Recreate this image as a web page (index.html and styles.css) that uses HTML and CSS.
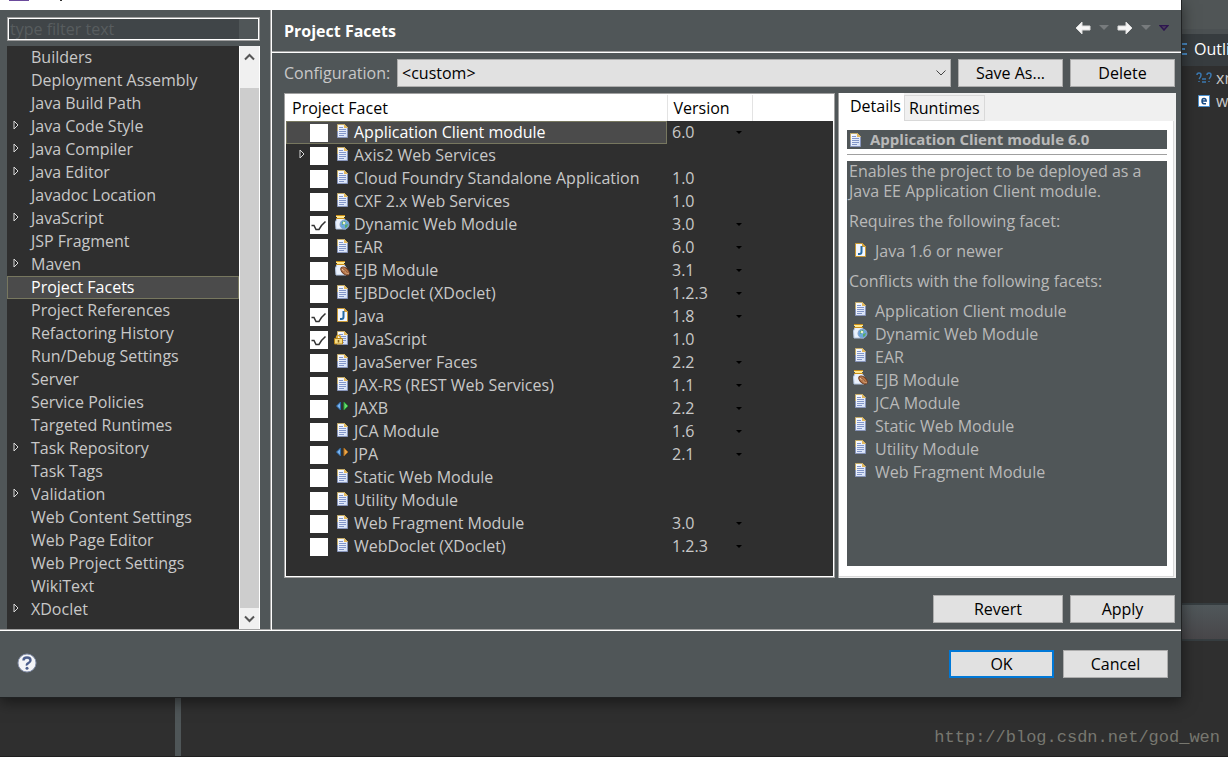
FILE: index.html
```html
<!DOCTYPE html>
<html lang="en">
<head>
<meta charset="utf-8">
<title>Properties</title>
<link rel="stylesheet" href="styles.css">
</head>
<body>
<svg class="defs" aria-hidden="true">
  <defs>
    <linearGradient id="paper" x1="0" y1="0" x2="1" y2="1"><stop offset="0" stop-color="#fff"/><stop offset="1" stop-color="#cfdcf5"/></linearGradient>
  </defs>
  <symbol id="doc" viewBox="0 0 16 16">
    <path d="M3.500 2.500h7L13.500 5.500v10H3.500z" fill="url(#paper)" stroke="#8795bb"/>
    <path d="M3.500 9V2.500h7L13.500 5.500" fill="none" stroke="#c4ac69"/>
    <path d="M10 2l4 4h-4z" fill="#e3b95e"/>
    <path d="M5 5.500h4M5 7.500h7M5 9.500h7M5 11.500h7M5 13.500h5" stroke="#8296c9"/>
  </symbol>
  <symbol id="jar" viewBox="0 0 16 16">
    <path d="M3 4.500h7l2 3v7.500H2L1.500 8z" fill="#eaf1fc" stroke="#b3c6e2"/>
    <path d="M2 1.500h9M2 4.500h9" stroke="#c98f1a"/>
    <path d="M2 2.500h9M3 3.500h7" stroke="#ffe890"/>
  </symbol>
  <symbol id="web" viewBox="0 0 16 16">
    <use href="#jar"/>
    <circle cx="10.500" cy="10.500" r="4.500" fill="#6aa6dc" stroke="#8ba5c9"/>
    <path d="M8 8l3-1 1 2-2 1-2 1zM11 11l3-1-1 3-2 1z" fill="#5ba863"/>
    <path d="M9 8.500l2 1" stroke="#f5f5d5" stroke-width="2"/>
  </symbol>
  <symbol id="ejb" viewBox="0 0 16 16">
    <use href="#jar"/>
    <ellipse cx="11" cy="11" rx="5" ry="3" transform="rotate(42 11 11)" fill="#b9794c" stroke="#6e3d22"/>
    <path d="M8 9.500l3 1 1 2 3 1.500" fill="none" stroke="#f1c9a0"/>
    <path d="M9 8.500l5 5" stroke="#7b4425"/>
  </symbol>
  <symbol id="java" viewBox="0 0 16 16">
    <path d="M3.500 2.500h7L13.500 5.500v10H3.500z" fill="#f2f7ff" stroke="#c99a35"/>
    <path d="M10 2l4 4h-4z" fill="#d7a53c"/>
    <path d="M9.500 5v6q0 2-2 2H6" fill="none" stroke="#246aa5" stroke-width="2"/>
  </symbol>
  <symbol id="lock" viewBox="0 0 16 16">
    <use href="#doc"/>
    <path d="M2.500 10V8.500a2 2 0 0 1 4 0V10" fill="none" stroke="#d8a52b" stroke-width="1.500"/>
    <path d="M.5 9.500h8V15h-8z" fill="#f5dc83" stroke="#b98518"/>
    <path d="M4.500 11v2.500" stroke="#87621a" stroke-width="1.500"/>
  </symbol>
  <symbol id="jaxb" viewBox="0 0 16 16">
    <path d="M6.500 4v8L2.500 8z" fill="#79b3ef" stroke="#2868a8"/><path d="M10 4v8L14 8z" fill="#69d66e" stroke="#259b36"/>
  </symbol>
  <symbol id="jpa" viewBox="0 0 16 16">
    <path d="M6.500 4v8L2.500 8z" fill="#79b3ef" stroke="#2868a8"/><path d="M10 4v8L14 8z" fill="#e8a54b" stroke="#a96b1d"/>
  </symbol>
  <symbol id="twisty" viewBox="0 0 6 10"><path d="M1 1v8l4-4z" fill="#222" stroke="#dadada"/></symbol>
  <symbol id="arrow" viewBox="0 0 16 14"><path d="M1 7l6-6v4h8v4H7v4z" fill="#f7f7f7" stroke="#dcdcdc"/></symbol>
</svg>

<div class="workbench">
  <div class="bench-toolbar"></div>
  <div class="bench-main">
    <div class="bench-left"></div>
    <div class="bench-right">
      <aside class="outline">
        <div class="outline-tab"><svg width="7" height="12" viewBox="0 0 7 12"><path d="M0 1h6M1 6h3M0 11h6" stroke="#4a8bc4" stroke-width="2"/></svg>Outline</div>
        <div class="outline-row"><svg width="16" height="12" viewBox="0 0 16 12"><path d="M1 3q0-2 2-2t2 2-2 4m0 2v1M11 3q0-2 2-2t2 2-2 4m0 2v1M6 7h4M6 10h4" fill="none" stroke="#3b78b0" stroke-width="1.500"/></svg>xml</div>
        <div class="outline-row"><svg class="el-icon" width="12" height="12" viewBox="0 0 12 12"><path d="M.5.500h11v11H.5z" fill="#fff" stroke="#4a90cf"/><path d="M4 6h4.200Q8 3.500 6 3.500T4 6 6 8.800h2" fill="none" stroke="#1b4d86" stroke-width="1.500"/></svg>web-app</div>
      </aside>
      <div class="bench-strip"></div>
      <div class="bench-bottom"><span class="watermark">http://blog.csdn.net/god_wen</span></div>
    </div>
  </div>
</div>

<div class="dialog" role="dialog" aria-label="Properties">
  <div class="titlebar"><svg width="70" height="4" viewBox="0 0 70 4"><path d="M9 0h20" stroke="#6b4a9c" stroke-width="2"/><path d="M60 0h2" stroke="#333" stroke-width="2"/></svg></div>
  <div class="pages">
    <nav class="sidebar">
      <input class="filter" type="text" placeholder="type filter text" aria-label="type filter text">
      <div class="tree-box">
        <ul class="tree">
          <li>Builders</li>
          <li>Deployment Assembly</li>
          <li>Java Build Path</li>
          <li class="parent"><svg class="twisty"><use href="#twisty"/></svg>Java Code Style</li>
          <li class="parent"><svg class="twisty"><use href="#twisty"/></svg>Java Compiler</li>
          <li class="parent"><svg class="twisty"><use href="#twisty"/></svg>Java Editor</li>
          <li>Javadoc Location</li>
          <li class="parent"><svg class="twisty"><use href="#twisty"/></svg>JavaScript</li>
          <li>JSP Fragment</li>
          <li class="parent"><svg class="twisty"><use href="#twisty"/></svg>Maven</li>
          <li class="selected">Project Facets</li>
          <li>Project References</li>
          <li>Refactoring History</li>
          <li>Run/Debug Settings</li>
          <li>Server</li>
          <li>Service Policies</li>
          <li>Targeted Runtimes</li>
          <li class="parent"><svg class="twisty"><use href="#twisty"/></svg>Task Repository</li>
          <li>Task Tags</li>
          <li class="parent"><svg class="twisty"><use href="#twisty"/></svg>Validation</li>
          <li>Web Content Settings</li>
          <li>Web Page Editor</li>
          <li>Web Project Settings</li>
          <li>WikiText</li>
          <li class="parent"><svg class="twisty"><use href="#twisty"/></svg>XDoclet</li>
        </ul>
        <div class="scrollbar">
          <button class="scroll-up" aria-label="Scroll up"><svg width="11" height="8" viewBox="0 0 11 8"><path d="M1 6.500l4.500-4.500L10 6.500" fill="none" stroke="#555" stroke-width="2"/></svg></button>
          <div class="thumb"></div>
          <button class="scroll-down" aria-label="Scroll down"><svg width="11" height="8" viewBox="0 0 11 8"><path d="M1 1.500L5.500 6 10 1.500" fill="none" stroke="#555" stroke-width="2"/></svg></button>
        </div>
      </div>
    </nav>
    <main class="page">
      <header class="page-head">
        <h1>Project Facets</h1>
        <div class="history">
          <button aria-label="Back"><svg width="16" height="14"><use href="#arrow"/></svg></button>
          <button aria-label="Back history"><svg width="10" height="6" viewBox="0 0 10 6"><path d="M0 0h10L5 5z" fill="#777b7d"/></svg></button>
          <button aria-label="Forward"><svg class="flip" width="16" height="14"><use href="#arrow"/></svg></button>
          <button aria-label="Forward history"><svg width="10" height="6" viewBox="0 0 10 6"><path d="M0 0h10L5 5z" fill="#777b7d"/></svg></button>
          <button aria-label="Menu"><svg width="10" height="6" viewBox="0 0 10 6"><path d="M1 .5h8L5 5z" fill="#4b4158" stroke="#2e1650" stroke-width="1.500"/></svg></button>
        </div>
      </header>
      <div class="page-body">
        <div class="config">
          <label for="config">Configuration:</label>
          <div class="combo">
            <select id="config"><option>&lt;custom&gt;</option></select>
            <svg class="chevron" width="10" height="6" viewBox="0 0 10 6"><path d="M.5.500L5 5 9.500.500" fill="none" stroke="#444"/></svg>
          </div>
          <button class="btn">Save As...</button>
          <button class="btn">Delete</button>
        </div>
        <div class="panes">
          <div class="facets">
            <table>
              <colgroup><col class="c-name"><col class="c-version"><col></colgroup>
              <thead><tr><th>Project Facet</th><th>Version</th><th></th></tr></thead>
              <tbody>
                <tr class="current"><td><label><input type="checkbox"><svg class="icon"><use href="#doc"/></svg>Application Client module</label></td><td class="drop">6.0</td><td></td></tr>
                <tr class="expandable"><td><svg class="twisty"><use href="#twisty"/></svg><label><input type="checkbox"><svg class="icon"><use href="#doc"/></svg>Axis2 Web Services</label></td><td></td><td></td></tr>
                <tr><td><label><input type="checkbox"><svg class="icon"><use href="#doc"/></svg>Cloud Foundry Standalone Application</label></td><td>1.0</td><td></td></tr>
                <tr><td><label><input type="checkbox"><svg class="icon"><use href="#doc"/></svg>CXF 2.x Web Services</label></td><td>1.0</td><td></td></tr>
                <tr><td><label><input type="checkbox" checked><svg class="icon"><use href="#web"/></svg>Dynamic Web Module</label></td><td class="drop">3.0</td><td></td></tr>
                <tr><td><label><input type="checkbox"><svg class="icon"><use href="#doc"/></svg>EAR</label></td><td class="drop">6.0</td><td></td></tr>
                <tr><td><label><input type="checkbox"><svg class="icon"><use href="#ejb"/></svg>EJB Module</label></td><td class="drop">3.1</td><td></td></tr>
                <tr><td><label><input type="checkbox"><svg class="icon"><use href="#doc"/></svg>EJBDoclet (XDoclet)</label></td><td class="drop">1.2.3</td><td></td></tr>
                <tr><td><label><input type="checkbox" checked><svg class="icon"><use href="#java"/></svg>Java</label></td><td class="drop">1.8</td><td></td></tr>
                <tr><td><label><input type="checkbox" checked><svg class="icon"><use href="#lock"/></svg>JavaScript</label></td><td>1.0</td><td></td></tr>
                <tr><td><label><input type="checkbox"><svg class="icon"><use href="#doc"/></svg>JavaServer Faces</label></td><td class="drop">2.2</td><td></td></tr>
                <tr><td><label><input type="checkbox"><svg class="icon"><use href="#doc"/></svg>JAX-RS (REST Web Services)</label></td><td class="drop">1.1</td><td></td></tr>
                <tr><td><label><input type="checkbox"><svg class="icon"><use href="#jaxb"/></svg>JAXB</label></td><td class="drop">2.2</td><td></td></tr>
                <tr><td><label><input type="checkbox"><svg class="icon"><use href="#doc"/></svg>JCA Module</label></td><td class="drop">1.6</td><td></td></tr>
                <tr><td><label><input type="checkbox"><svg class="icon"><use href="#jpa"/></svg>JPA</label></td><td class="drop">2.1</td><td></td></tr>
                <tr><td><label><input type="checkbox"><svg class="icon"><use href="#doc"/></svg>Static Web Module</label></td><td></td><td></td></tr>
                <tr><td><label><input type="checkbox"><svg class="icon"><use href="#doc"/></svg>Utility Module</label></td><td></td><td></td></tr>
                <tr><td><label><input type="checkbox"><svg class="icon"><use href="#doc"/></svg>Web Fragment Module</label></td><td class="drop">3.0</td><td></td></tr>
                <tr><td><label><input type="checkbox"><svg class="icon"><use href="#doc"/></svg>WebDoclet (XDoclet)</label></td><td class="drop">1.2.3</td><td></td></tr>
              </tbody>
            </table>
          </div>
          <section class="info">
            <div class="tabs" role="tablist">
              <button class="tab active" role="tab" aria-selected="true">Details</button>
              <button class="tab" role="tab" aria-selected="false">Runtimes</button>
            </div>
            <div class="tab-body">
              <h2><svg class="icon"><use href="#doc"/></svg>Application Client module 6.0</h2>
              <div class="description">
                <p>Enables the project to be deployed as a Java EE Application Client module.</p>
                <p>Requires the following facet:</p>
                <ul>
                  <li><svg class="icon"><use href="#java"/></svg>Java 1.6 or newer</li>
                </ul>
                <p>Conflicts with the following facets:</p>
                <ul>
                  <li><svg class="icon"><use href="#doc"/></svg>Application Client module</li>
                  <li><svg class="icon"><use href="#web"/></svg>Dynamic Web Module</li>
                  <li><svg class="icon"><use href="#doc"/></svg>EAR</li>
                  <li><svg class="icon"><use href="#ejb"/></svg>EJB Module</li>
                  <li><svg class="icon"><use href="#doc"/></svg>JCA Module</li>
                  <li><svg class="icon"><use href="#doc"/></svg>Static Web Module</li>
                  <li><svg class="icon"><use href="#doc"/></svg>Utility Module</li>
                  <li><svg class="icon"><use href="#doc"/></svg>Web Fragment Module</li>
                </ul>
              </div>
            </div>
          </section>
        </div>
        <div class="page-actions">
          <button class="btn wide">Revert</button>
          <button class="btn">Apply</button>
        </div>
      </div>
    </main>
  </div>
  <footer class="dialog-foot">
    <button class="help" aria-label="Help"><svg width="20" height="20" viewBox="0 0 20 20"><circle cx="10" cy="10" r="9" fill="#f4f5f7" stroke="#8792ad"/><path d="M6.500 7.500Q6.500 4.500 10 4.500T13.500 7.300Q13.500 9 11.500 10T10 12.500" fill="none" stroke="#4d5f8c" stroke-width="2.400"/><circle cx="10" cy="15.300" r="1.500" fill="#4d5f8c"/></svg></button>
    <div class="dialog-actions">
      <button class="btn default">OK</button>
      <button class="btn">Cancel</button>
    </div>
  </footer>
</div>
</body>
</html>
```

FILE: styles.css
```css
* { box-sizing: border-box; }
body {
  margin: 0;
  height: 100vh;
  overflow: hidden;
  background: #2f2f2f;
  color: #c8c8c8;
  font: 16px/20px "Open Sans", sans-serif;
}
button, input, select { font: inherit; }
ul { list-style: none; margin: 0; padding: 0; }
svg { display: block; flex: none; }
.defs { position: absolute; width: 0; height: 0; }
.icon { width: 16px; height: 16px; }
.twisty { width: 6px; height: 10px; }

/* Workbench behind the dialog */
.workbench { height: 100vh; display: flex; flex-direction: column; }
.bench-toolbar { height: 34px; background: #505556; border-bottom: 5px solid #4b5052; }
.bench-main { flex: 1; display: flex; border-bottom: 1px solid #1f1f1f; }
.bench-left { width: 181px; border-right: 6px solid #4f5658; }
.bench-right { flex: 1; display: flex; flex-direction: column; }
.outline { flex: 1; align-self: flex-end; width: 47px; overflow: hidden; white-space: nowrap; }
.outline-tab { display: flex; align-items: center; gap: 6px; height: 32px; padding-bottom: 2px; background: #373c3f; color: #fff; }
.outline-row { display: flex; align-items: center; gap: 4px; height: 23px; padding-left: 15px; }
.el-icon { margin: 0 2px; }
.bench-strip { height: 38px; background: linear-gradient(#50575a, #484649); border: solid #363d40; border-width: 2px 0; }
.bench-bottom { height: 115px; display: flex; justify-content: flex-end; align-items: flex-end; padding: 0 8px 6px; }
.watermark { font: 17px/24px "Liberation Mono", monospace; color: #77776f; }

/* Dialog window */
.dialog {
  position: absolute;
  inset: 0 46px 59px 0;
  display: flex;
  flex-direction: column;
  background: #505658;
  border: solid #202223;
  border-width: 0 1px 1px 0;
  box-shadow: 0 4px 14px rgba(0, 0, 0, .5);
}
.titlebar { height: 10px; background: #fff; }
.pages { flex: 1; min-height: 0; display: flex; border-bottom: 1px solid #fff; box-shadow: inset 0 -1px #a0a0a0; }
.sidebar { width: 272px; padding: 7px 11px 0 7px; display: flex; flex-direction: column; gap: 5px; border-right: 1px solid #fff; box-shadow: inset -1px 0 #a0a0a0; }
.filter {
  width: 100%;
  height: 24px;
  padding: 0 2px;
  border: 1px solid #a0a0a0;
  outline: 1px solid #fff;
  outline-offset: -2px;
  background: linear-gradient(90deg, #404548 92%, #505658 92%);
  color: #fff;
}
.filter::placeholder { color: #585d5f; opacity: 1; }
.tree-box { flex: 1; min-height: 0; display: flex; background: #2f2f2f; margin-bottom: 1px; }
.tree { flex: 1; overflow: hidden; }
.tree li { display: flex; align-items: center; gap: 12px; height: 23px; padding: 0 0 2px 24px; white-space: nowrap; }
.tree .parent { padding-left: 6px; }
.tree .twisty { margin-bottom: 2px; }
.tree .selected { background: #4b4b4b; border: 1px solid #77775f; padding-left: 23px; color: #fff; }
.scrollbar { width: 21px; display: flex; flex-direction: column; background: #f0f0f0; border: solid #fff; border-width: 0 1px; }
.scrollbar button { border: 0; padding: 0; background: none; display: flex; justify-content: center; align-items: center; }
.scroll-up { height: 21px; margin-bottom: 21px; }
.scroll-down { height: 21px; }
.thumb { flex: 1; background: #cdcdcd; }

.page { flex: 1; min-width: 0; display: flex; flex-direction: column; }
.page-head { height: 43px; flex: none; display: flex; justify-content: space-between; padding: 0 12px; border-bottom: 1px solid #fff; box-shadow: inset 0 -1px #a0a0a0; }
h1 { margin: 11px 0 0; font-size: 16px; line-height: 20px; color: #fff; }
.history { display: flex; align-items: center; gap: 8px; height: 36px; }
.history button { border: 0; padding: 0; background: none; }
.flip { transform: scaleX(-1); }
.page-body { flex: 1; min-height: 0; display: flex; flex-direction: column; padding: 6px 5px 7px 12px; }
.config { display: flex; align-items: center; gap: 7px; padding-right: 1px; }
.config label { width: 106px; }
.combo { flex: 1; display: flex; position: relative; }
.combo select { appearance: none; width: 100%; height: 28px; padding: 0 4px; border: 1px solid #adadad; border-radius: 0; background: #e1e1e1; color: #000; }
.chevron { position: absolute; right: 5px; top: 11px; pointer-events: none; }
.btn { width: 105px; height: 28px; padding: 0; border: 1px solid #adadad; background: #e1e1e1; color: #000; }
.btn.wide { width: 130px; }
.btn.default { border: 2px solid #0078d7; }

.panes { flex: 1; min-height: 0; display: grid; grid-template-columns: 1fr 338px; gap: 3px; margin: 6px 0 17px; }
.facets { background: #2f2f2f; border: 1px solid #a0a0a0; outline: 1px solid #fff; outline-offset: -2px; padding: 1px; overflow: hidden; }
table { width: 100%; table-layout: fixed; border-collapse: collapse; }
.c-name { width: 381px; }
.c-version { width: 85px; }
th { height: 26px; padding: 0 6px; background: #fff; color: #000; font-weight: 400; text-align: left; border-right: 1px solid #e3e3e3; }
th:last-child { border: 0; }
td { height: 23px; padding: 0 6px 2px 5px; vertical-align: middle; }
td:first-child { padding: 0 0 0 24px; }
td label { display: flex; align-items: center; padding-bottom: 1px; }
td .icon { margin: 0 4px 5px 6px; }
input[type="checkbox"] { appearance: none; flex: none; width: 18px; height: 18px; margin: 2px 0 0; background: #fff; }
input[type="checkbox"]:checked { background: #fff url("data:image/svg+xml,%3Csvg xmlns='http://www.w3.org/2000/svg' viewBox='0 0 18 18'%3E%3Cpath d='M1.500 9.500H4L6 13.500H9L11.500 9.500L15.500 5.500' fill='none' stroke='%23333' stroke-width='1.500'/%3E%3C/svg%3E"); }
.current td:first-child { background: #4b4b4b; box-shadow: inset 0 0 0 1px #77775f; color: #fff; }
.expandable td:first-child { display: flex; align-items: center; gap: 5px; padding-left: 13px; }
.expandable .twisty { margin-bottom: 3px; }
.drop::after { content: ""; float: right; margin: 9px 4px 0 0; border: solid transparent; border-width: 3px 3px 0; border-top-color: #000; }

.info { display: flex; flex-direction: column; background: #f0f0f0; border: solid #a0a0a0; border-width: 0 0 0 1px; }
.tabs { display: flex; align-items: flex-end; height: 28px; }
.tab { border: 1px solid #d9d9d9; padding: 0 4px; height: 26px; background: #f0f0f0; color: #000; }
.tab.active { height: 28px; padding: 0 3px 2px 11px; background: #fff; border: 0; }
.tab-body { flex: 1; min-height: 0; display: flex; flex-direction: column; margin: 0 2px 1px 0; padding: 9px 6px 10px 8px; background: #fff; border: solid #d9d9d9; border-width: 0 1px 1px 0; color: #b9b9b9; }
h2 { display: flex; align-items: center; gap: 7px; height: 19px; margin: 0; background: #505658; font-size: 15px; line-height: 19px; }
h2 .icon { margin-bottom: 2px; }
.description { flex: 1; margin-top: 5px; padding-top: 6px; border-top: 1px solid #a0a0a0; display: flex; flex-direction: column; background: #505658 content-box; }
.description p { margin: 0 2px 10px; }
.description p:last-of-type { margin-bottom: 8px; }
.description ul { margin: 0 5px 10px; }
.description li { display: flex; align-items: center; gap: 7px; height: 23px; }
.description li:only-child { height: 20px; }
.description .icon { margin-bottom: 5px; }

.page-actions { display: flex; justify-content: flex-end; gap: 7px; padding-right: 1px; }
.dialog-foot { flex: none; height: 66px; display: flex; align-items: center; justify-content: space-between; padding: 0 13px 0 17px; }
.help { border: 0; padding: 0 0 2px; background: none; }
.dialog-actions { display: flex; gap: 9px; }
```
